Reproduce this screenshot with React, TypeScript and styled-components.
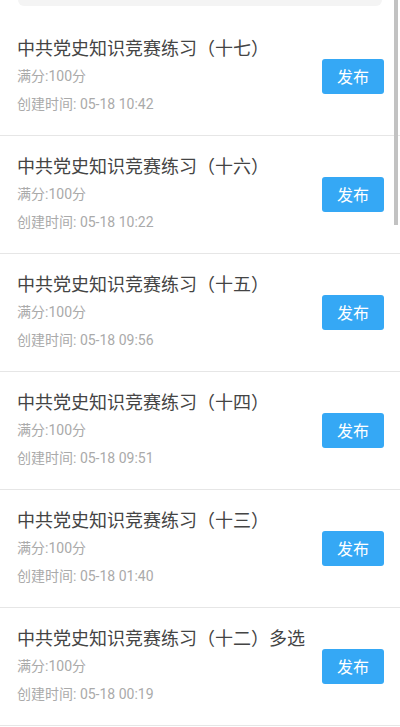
import React from 'react'
import styled, { createGlobalStyle } from 'styled-components'

const GlobalStyle = createGlobalStyle`
  html, body {
    margin: 0;
    padding: 0;
    background: #fff;
    font-family: Roboto, "Noto Sans CJK SC", sans-serif;
    overflow: hidden;
  }
`

const list = [
  { title: '中共党史知识竞赛练习（十七）', time: '05-18 10:42' },
  { title: '中共党史知识竞赛练习（十六）', time: '05-18 10:22' },
  { title: '中共党史知识竞赛练习（十五）', time: '05-18 09:56' },
  { title: '中共党史知识竞赛练习（十四）', time: '05-18 09:51' },
  { title: '中共党史知识竞赛练习（十三）', time: '05-18 01:40' },
  { title: '中共党史知识竞赛练习（十二）多选', time: '05-18 00:19' },
]

const App = () => {
  return (
    <>
      <GlobalStyle />
      <Page>
        <Main>
          <SearchWrap>
            <SearchBox />
          </SearchWrap>
          {list.map((item) => (
            <Row key={item.time}>
              <Info>
                <Title>{item.title}</Title>
                <Sub>满分:100分</Sub>
                <Sub>创建时间: {item.time}</Sub>
              </Info>
              <Button>发布</Button>
            </Row>
          ))}
        </Main>
        <ScrollTrack>
          <Thumb />
        </ScrollTrack>
      </Page>
    </>
  )
}

export default App

const Page = styled.div`
  width: 400px;
  height: 727px;
  display: flex;
  overflow: hidden;
`

const Main = styled.div`
  flex: 1;
  min-width: 0;
  margin-right: -6px;
`

const ScrollTrack = styled.div`
  width: 6px;
  position: relative;
  z-index: 1;
`

const Thumb = styled.div`
  width: 4px;
  height: 225px;
  background: #c2c2c2;
`

const SearchWrap = styled.div`
  height: 18px;
  padding: 0 18px 0 18px;
  box-sizing: border-box;
`

const SearchBox = styled.div`
  height: 6px;
  background: #f4f4f4;
  border-radius: 0 0 14px 14px;
`

const Row = styled.div`
  height: 118px;
  box-sizing: border-box;
  padding: 0 16px 0 17px;
  display: flex;
  align-items: center;
  justify-content: space-between;
  border-bottom: 1px solid #e6e6e6;
`

const Info = styled.div`
  display: flex;
  flex-direction: column;
  margin-top: 1px;
`

const Title = styled.div`
  font-size: 18px;
  line-height: 26px;
  color: #444;
`

const Sub = styled.div`
  font-size: 14px;
  line-height: 28px;
  color: #aaa;
`

const Button = styled.div`
  width: 62px;
  height: 35px;
  border-radius: 3px;
  background: #35a8f5;
  color: #fff;
  font-size: 16px;
  display: flex;
  align-items: center;
  justify-content: center;
  margin-top: -1px;
`
